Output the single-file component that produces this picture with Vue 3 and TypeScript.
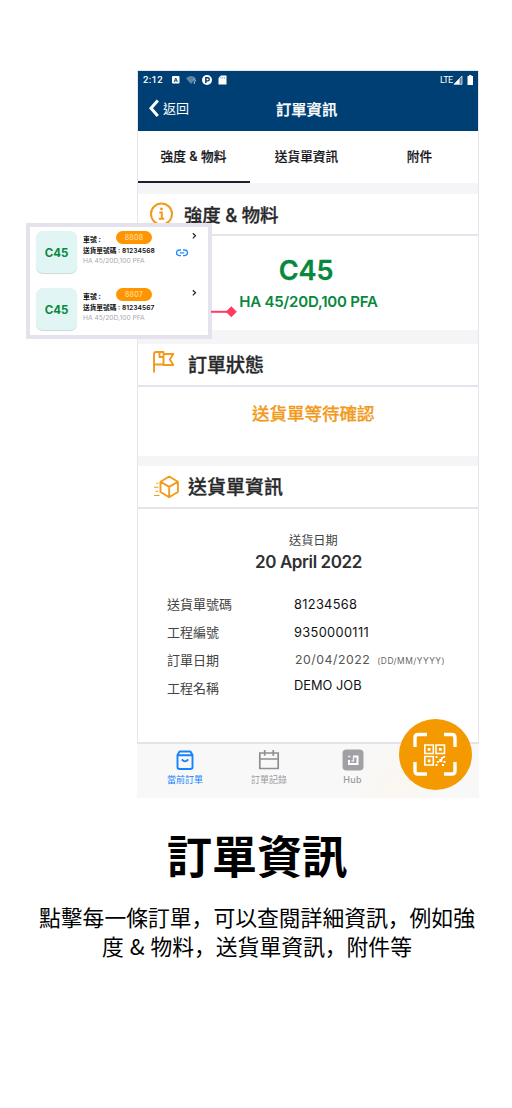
<script setup lang="ts">
interface Detail { label: string; value: string; kind: string; hint?: string }
interface Vehicle { plate: string; note: string; linked: boolean }

const details: Detail[] = [
  { label: '送貨單號碼', value: '81234568', kind: 'number' },
  { label: '工程編號', value: '9350000111', kind: 'project' },
  { label: '訂單日期', value: '20/04/2022', kind: 'ordered', hint: '(DD/MM/YYYY)' },
  { label: '工程名稱', value: 'DEMO JOB', kind: 'name' },
]
const vehicles: Vehicle[] = [
  { plate: '8808', note: '81234568', linked: true },
  { plate: '8807', note: '81234567', linked: false },
]
</script>

<template>
  <main class="page">
    <section class="phone">
      <header class="top">
        <div class="status">
          <span class="clock">2:12</span>
          <svg class="status-icons" width="58" height="12" viewBox="0 0 58 12">
            <rect x="1" y="2" width="7.500" height="7.500" rx="1" fill="#fff" />
            <path d="M3.200 8 4.800 4l1.600 4M3.900 6.800h1.900" fill="none" stroke="#003f73" stroke-width=".9" />
            <path d="M15 4.200Q20 0 25 4.200L20 10Z" fill="#5f83a3" />
            <path d="M22.500 6q2-1 2 .8l-1.200 1.200v2" fill="none" stroke="#b7c7d5" />
            <circle cx="36" cy="6" r="5" fill="#fff" />
            <path d="M34.800 9V3.700h1.900a1.500 1.500 0 0 1 0 3.200h-1.900" fill="none" stroke="#003f73" stroke-width="1.400" />
            <path d="M50 1.500H55.500v9h-8V4Z" fill="#fff" />
            <path d="M50 3v1.600M51.800 3v1.600M53.600 3v1.600" stroke="#6787a5" stroke-width=".7" />
          </svg>
          <span class="lte">LTE</span>
          <svg class="signal" width="22" height="12" viewBox="0 0 22 12">
            <path d="M1 10.300 9 2v8.300Z" fill="#5c80a0" /><path d="M1 10.300 6.500 4.500v5.800Z" fill="#fff" />
            <path d="M1 10.300 9 2v8.300Z" fill="none" stroke="#fff" stroke-width=".7" />
            <path d="M14.500 2h1.500V1h2.500v1H20v9h-5.500Z" fill="#fff" />
          </svg>
        </div>
        <div class="titlebar">
          <svg class="back-icon" width="12" height="19" viewBox="0 0 12 19"><path d="m9.800 1.500-6.800 7.700 6.800 7.700" fill="none" stroke="#fff" stroke-width="3" /></svg>
          <span class="back">返回</span>
          <h1>訂單資訊</h1>
        </div>
      </header>
      <nav class="tabs">
        <span class="tab active">強度 &amp; 物料</span><span class="tab">送貨單資訊</span><span class="tab">附件</span>
      </nav>
      <div class="gap first"></div>
      <div class="heading mix">
        <svg width="24" height="24" viewBox="0 0 24 24" fill="none" stroke="#f29a1c" stroke-width="2">
          <circle cx="11.500" cy="12" r="10.500" /><path d="M9.300 10.500h2.500v6M8.800 16.800h5.500" /><circle cx="11.500" cy="7" r="1.400" fill="#f29a1c" stroke="none" />
        </svg>
        <h2>強度 &amp; 物料</h2>
      </div>
      <div class="strength"><strong>C45</strong><span>HA 45/20D,100 PFA</span></div>
      <div class="gap second"></div>
      <div class="heading flag">
        <svg width="24" height="24" viewBox="0 0 24 24" fill="none" stroke="#f29a1c" stroke-width="1.900" stroke-linejoin="round">
          <path d="M3 22.500V4q0-2 2-2h7.500v12.500H3M12.500 4h9.800l-3.400 5.500 3.400 5.500h-9.800V11.500M8.500 2v5h4" />
        </svg>
        <h2>訂單狀態</h2>
      </div>
      <div class="state">送貨單等待確認</div>
      <div class="gap third"></div>
      <div class="heading parcel">
        <svg width="28" height="24" viewBox="0 0 28 24" fill="none" stroke="#f29a1c" stroke-width="1.900" stroke-linejoin="round">
          <path d="m17.200 1.500 8.700 5.200v10.300l-8.700 5.200-8.700-5.200V6.700ZM8.500 6.700l8.700 5.200 8.700-5.200M17.200 11.900v10.300" />
          <path d="M4.500 8.200h2M2 12.200h4.500M3.500 16.200h3M2 20.500h5.500" stroke-width="1.100" />
        </svg>
        <h2>送貨單資訊</h2>
      </div>
      <div class="delivery">
        <p class="date-label">送貨日期</p>
        <p class="date">20 April 2022</p>
        <dl>
          <div v-for="d in details" :key="d.label" class="detail">
            <dt>{{ d.label }}</dt>
            <dd :class="d.kind"><span>{{ d.value }}</span><small v-if="d.hint">{{ d.hint }}</small></dd>
          </div>
        </dl>
      </div>
      <footer class="bottom">
        <div class="dock current">
          <svg width="20" height="20" viewBox="0 0 20 20" fill="none" stroke="#1683fb" stroke-width="1.900" stroke-linejoin="round">
            <path d="M4.500 1.500h11l2 3.500v12q0 2-2 2h-11q-2 0-2-2V5ZM2.500 5.300h15M6.800 9.300q3.200 4.200 6.400 0" />
          </svg><span>當前訂單</span>
        </div>
        <div class="dock">
          <svg width="22" height="20" viewBox="0 0 22 20" fill="none" stroke="#8e8e93" stroke-width="1.700"><path d="M1.800 3h18.400v15.500H1.800ZM1.800 9h18.400M6.700 0v5.700M15.300 0v5.700" /></svg>
          <span>訂單記錄</span>
        </div>
        <div class="dock hub">
          <svg width="22" height="22" viewBox="0 0 22 22"><rect x=".5" y=".5" width="21" height="21" rx="4" fill="#a1a1a5" /><path d="M11 7.500h4.500v7.500H7v-4" fill="none" stroke="#fff" stroke-width="2" /><path d="M11.500 8v4H9.500M6 7.500h2.500" fill="none" stroke="#eee" stroke-width="1.400" /></svg>
          <span>Hub</span>
        </div>
      </footer>
      <div class="scan">
        <svg width="44" height="44" viewBox="0 0 44 44" fill="none" stroke="#fff">
          <path d="M2 15V5.500q0-3 3-3h9M31 2.500h8q3 0 3 3V15M42 30v9q0 3-3 3h-8M14 42H5q-3 0-3-3v-9" stroke-width="3.400" />
          <path d="M11.800 13h8.500v8.500h-8.500ZM23 13h8.500v8.500H23ZM11.800 24.500h8.500V33h-8.500Z" stroke-width="1.600" />
          <path d="M14.700 15.900h2.800v2.800h-2.800ZM25.900 15.900h2.800v2.800h-2.800ZM14.700 27.400h2.800v2.800h-2.800ZM22.500 24h2v2h-2ZM30 24h2v2h-2ZM26.300 27h3v3h-3ZM23.800 29h2v2h-2ZM22.500 32h2v2h-2ZM28 25h2v2h-2ZM30.500 29h2v2h-2ZM29 32h2v2h-2Z" fill="#fff" stroke="none" />
        </svg>
      </div>
    </section>

    <aside class="callout">
      <div v-for="v in vehicles" :key="v.plate" class="vehicle">
        <span class="tile">C45</span>
        <div class="info">
          <div class="plate"><b>車號 :</b><span>{{ v.plate }}</span></div>
          <p class="note">送貨單號碼 : {{ v.note }}</p>
          <p class="mix-name">HA 45/20D,100 PFA</p>
        </div>
        <div class="marks">
          <svg class="chevron" width="5" height="8" viewBox="0 0 5 8"><path d="m.8 1.200 2.700 2.600L.8 6.400" fill="none" stroke="#222" stroke-width="1.200" /></svg>
          <svg v-if="v.linked" class="link" width="12" height="8" viewBox="0 0 12 8" fill="none" stroke="#2688fb" stroke-width="1.300"><path d="M5 1H3.300a2.800 2.800 0 0 0 0 5.600H5M7 1h1.700a2.800 2.800 0 0 1 0 5.600H7M3.800 3.800h4.400" /></svg>
        </div>
      </div>
    </aside>
    <svg class="pointer" width="27" height="12" viewBox="0 0 27 12"><path d="M0 5.800h21" stroke="#ff3b61" stroke-width="2" /><path d="m20.300.3 5.500 5.500-5.500 5.500-5.500-5.500Z" fill="#ff3b61" /></svg>

    <section class="caption">
      <h2>訂單資訊</h2>
      <p>點擊每一條訂單，可以查閱詳細資訊，例如強<br><span class="tail">度 &amp; 物料，送貨單資訊，附件等</span></p>
    </section>
  </main>
</template>

<style>
body { margin: 0; background: #fff; }
</style>

<style scoped>
* { box-sizing: border-box; }
h1, h2, p, dl, dd { margin: 0; }
svg { display: block; flex: none; }
.page { position: relative; width: 512px; height: 1108px; padding-top: 70px; overflow: hidden; background: #fff; font-family: Inter, "Noto Sans CJK TC", sans-serif; white-space: nowrap; }
.phone { position: relative; width: 342px; height: 728px; margin-left: 137px; border: 1px solid #e5e5ec; border-bottom: 0; }
.top { height: 60px; background: #003f73; color: #fff; }
.status { display: flex; height: 17px; padding-left: 5px; align-items: center; }
.clock { width: 27px; font: 500 9.600px/16px Roboto, sans-serif; letter-spacing: .3px; }
.lte { width: 14px; margin-left: 211px; font: 9px/16px Roboto, sans-serif; letter-spacing: -.45px; }
.status-icons { margin-left: 1px; }
.signal { margin-left: -1px; }
.titlebar { display: flex; height: 43px; padding: 0 0 2px 10px; align-items: center; }
.back { width: 114px; padding-left: 3px; font-size: 13px; line-height: 20px; margin-top: -1px; }
h1 { font-size: 15.300px; line-height: 22px; font-weight: 500; padding-top: 2px; margin-left: 2px; -webkit-text-stroke: .25px; }
.back-icon { margin-top: -1px; }
.tabs { display: flex; height: 52px; }
.tab { width: 114px; padding-top: 16px; padding-right: 1px; text-align: center; font-size: 12.700px; line-height: 20px; font-weight: 500; color: #17171d; -webkit-text-stroke: .2px; }
.tab:last-child { padding-right: 3px; }
.tab.active { width: 112px; border-bottom: 2px solid #20202c; }
.gap { background: #f5f5f8; }
.gap.first { height: 11px; }
.gap.second { height: 14px; }
.gap.third { height: 10px; }
.heading { display: flex; height: 42px; border-bottom: 2px solid #e5e4ec; align-items: center; padding-left: 12px; }
.heading h2 { color: #28282a; font-size: 19px; line-height: 28px; font-weight: 500; padding-top: 2px; -webkit-text-stroke: .3px; }
.mix h2 { margin-left: 10px; font-size: 18.400px; letter-spacing: -.15px; }
.flag { height: 43px; padding-left: 13px; }
.flag h2 { margin-left: 13px; }
.flag svg { margin-top: -5px; }
.parcel { height: 43px; padding-left: 14px; }
.parcel h2 { margin-left: 8px; }
.strength { display: flex; flex-direction: column; height: 94px; padding-top: 19px; align-items: center; color: #07883d; }
.strength strong { font-size: 27px; line-height: 32px; font-weight: 600; margin-left: -4px; letter-spacing: -.1px; -webkit-text-stroke: .3px; }
.strength span { font-size: 15px; line-height: 20px; font-weight: 600; margin: 5px 0 0 1px; letter-spacing: -.2px; }
.state { height: 69px; padding: 13px 0 0 114px; color: #f29a1c; font-size: 17.500px; line-height: 28px; font-weight: 500; -webkit-text-stroke: .25px; }
.delivery { height: 235px; padding-top: 23px; border-bottom: 2px solid #e4e4e8; }
.date-label { padding-left: 151px; font-size: 12.200px; line-height: 18px; color: #444; }
.date { padding-left: 117px; margin-top: 1px; font-size: 17px; line-height: 22px; font-weight: 600; letter-spacing: -.4px; color: #303032; }
dl { padding: 17px 0 0 29px; }
.detail { display: flex; height: 28px; align-items: center; }
dt { width: 127px; font-size: 13px; line-height: 20px; color: #444; }
dd { display: flex; align-items: center; color: #111; font-size: 12.800px; line-height: 20px; }
.number { letter-spacing: .32px; }
.project { padding-top: 2px; letter-spacing: .35px; }
.number { padding-top: 1px; }
.ordered { padding-left: 1px; margin-top: -1px; color: #555; font-size: 12.300px; letter-spacing: .52px; }
small { margin-left: 7px; padding-top: 2px; font-size: 8.400px; letter-spacing: .5px; color: #666; }
.name { margin-top: -4px; letter-spacing: .03px; }
.bottom { display: flex; height: 54px; margin: 0 -1px; padding-left: 6px; background: radial-gradient(circle at 260px 45px, #fbf7f1, #f8f8f8 55px); }
.dock { width: 84px; display: flex; flex-direction: column; align-items: center; padding-top: 6px; color: #99999d; }
.dock span { margin-top: 3px; font-size: 9px; line-height: 14px; }
.current { color: #1683fb; }
.hub { padding-top: 5px; padding-right: 1px; }
.hub span { margin-top: 2px; letter-spacing: .3px; font-weight: 500; }
.scan { position: absolute; left: 261px; top: 648px; width: 73px; height: 71px; padding: 13px 14px; border-radius: 50%; background: #f59900; }

.callout { position: absolute; left: 26px; top: 223px; width: 186px; height: 116px; border: 4px solid #e4e3ed; background: #fff; padding: 4px 6px; }
.vehicle { display: flex; height: 57px; }
.tile { width: 41px; height: 42px; border-radius: 7px; background: #e1f6f4; box-shadow: 0 1px 1px #cbd8d7; text-align: center; color: #07883d; font-size: 11.500px; line-height: 44px; font-weight: 700; }
.info { width: 75px; margin-left: 6px; }
.plate { display: flex; height: 14px; color: #111; font-size: 6.900px; line-height: 17px; }
.plate b { width: 33px; }
.plate span { width: 36px; height: 13px; border-radius: 7px; background: #ff9500; color: #ffe7bf; text-align: center; font-size: 7px; line-height: 14px; letter-spacing: .3px; }
.note { color: #111; font-size: 6.700px; line-height: 12px; font-weight: 600; }
.mix-name { color: #a8a8b0; font-size: 6.700px; line-height: 9px; }
.marks { display: flex; flex: 1; flex-direction: column; }
.chevron { margin: 1px 0 0 34px; }
.link { margin: 9px 0 0 18px; }
.pointer { position: absolute; left: 211px; top: 306px; }

.caption { margin-top: 27px; text-align: center; font-family: "Noto Sans CJK JP", sans-serif; color: #000; }
.caption h2 { font-size: 45px; line-height: 60px; font-weight: 700; padding-left: 2px; }
.caption p { margin-top: 17px; padding-left: 2px; font-size: 21.800px; line-height: 29px; }
.tail { word-spacing: 1px; }
</style>
